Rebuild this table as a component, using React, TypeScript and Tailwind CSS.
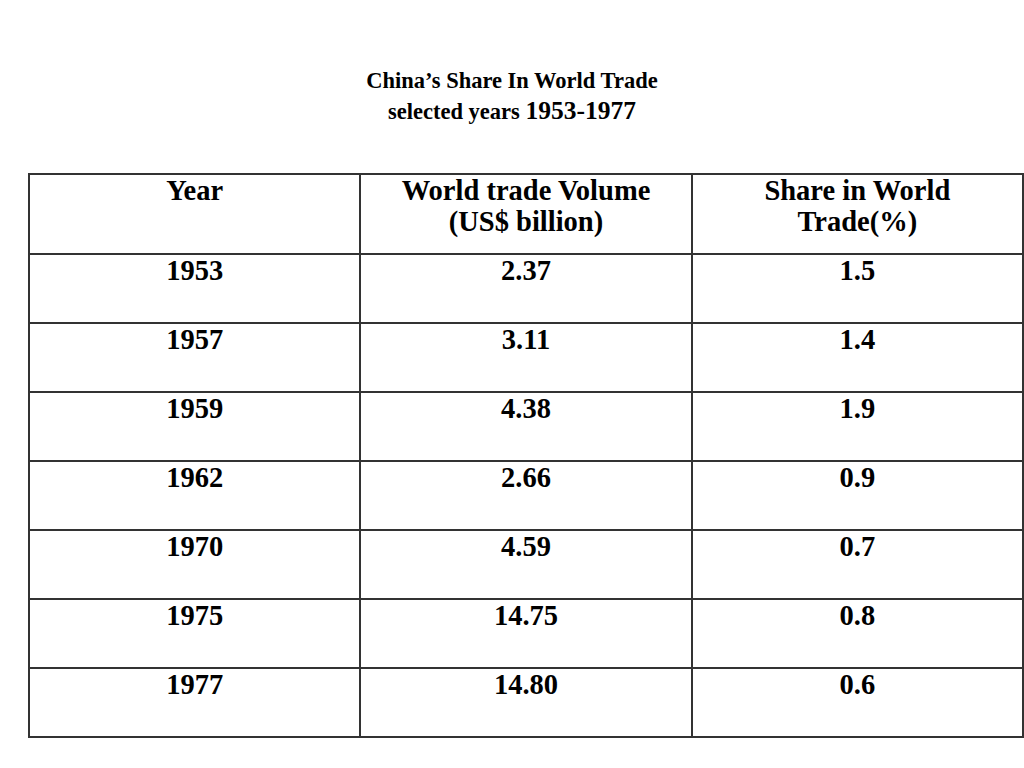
const rows = [
    ["1953", "2.37", "1.5"],
    ["1957", "3.11", "1.4"],
    ["1959", "4.38", "1.9"],
    ["1962", "2.66", "0.9"],
    ["1970", "4.59", "0.7"],
    ["1975", "14.75", "0.8"],
    ["1977", "14.80", "0.6"],
];

const App = () => {
    return (
        <div className="w-[1024px] h-[768px] bg-white text-black overflow-hidden font-['Liberation_Serif',serif]">
            <div className="pt-[66px] flex flex-col items-center font-bold">
                <div className="text-[22.5px] leading-[30px]">China’s Share In World Trade</div>
                <div className="text-[22.5px] leading-[30px]">
                    selected years <span className="text-[25.5px]">1953-1977</span>
                </div>
            </div>
            <table className="mt-[46px] ml-[28px] w-[996px] border-collapse table-fixed font-bold text-[28.5px] leading-[31px]">
                <thead>
                    <tr className="h-[80px]">
                        <th className="border-2 border-[#333] align-top p-0">Year</th>
                        <th className="border-2 border-[#333] align-top p-0">
                            World trade Volume
                            <br />
                            (US$ billion)
                        </th>
                        <th className="border-2 border-[#333] align-top p-0">
                            Share in World
                            <br />
                            Trade(%)
                        </th>
                    </tr>
                </thead>
                <tbody>
                    {rows.map((r) => (
                        <tr key={r[0]} className="h-[69px]">
                            {r.map((c, i) => (
                                <td key={i} className="border-2 border-[#333] align-top text-center p-0">
                                    {c}
                                </td>
                            ))}
                        </tr>
                    ))}
                </tbody>
            </table>
        </div>
    );
};

export default App;
